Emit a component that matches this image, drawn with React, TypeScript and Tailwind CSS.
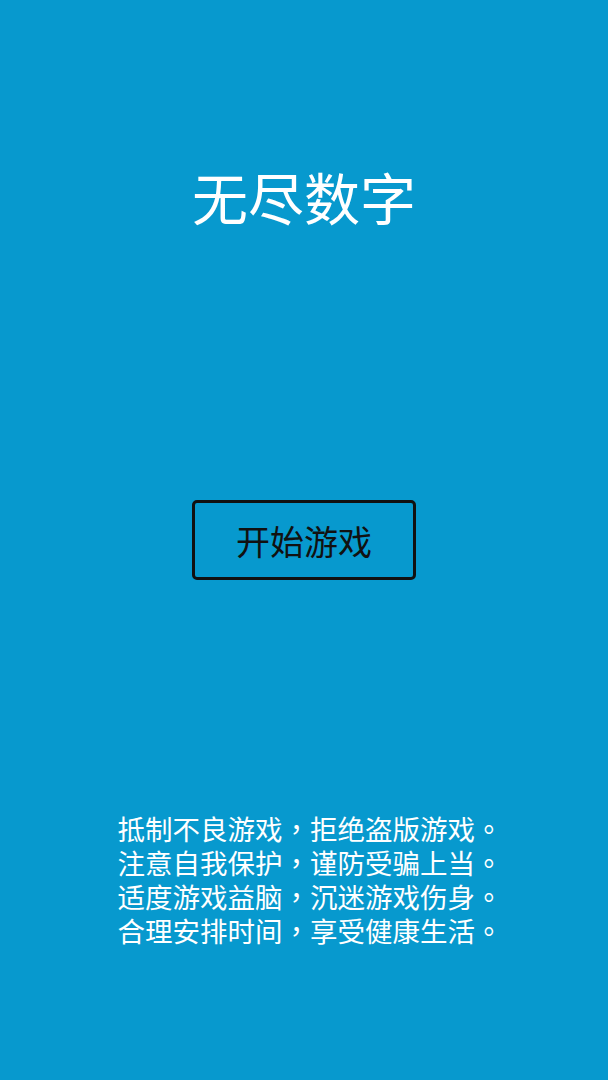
import React from "react";

const lines = [
  "抵制不良游戏，拒绝盗版游戏。",
  "注意自我保护，谨防受骗上当。",
  "适度游戏益脑，沉迷游戏伤身。",
  "合理安排时间，享受健康生活。",
];

// punctuation sits centred in its cell in the reference, as in the TC font
const Line: React.FC<{ text: string }> = ({ text }) => (
  <p>
    {text
      .split(/([，。])/)
      .filter(Boolean)
      .map((part, i) =>
        part === "，" || part === "。" ? (
          <span key={i} style={{ fontFamily: '"Noto Sans CJK TC", sans-serif' }}>
            {part}
          </span>
        ) : (
          <span key={i}>{part}</span>
        )
      )}
  </p>
);

const App: React.FC = () => {
  return (
    <div
      className="w-[608px] h-[1080px] bg-[#0799ce] flex flex-col items-center overflow-hidden"
      style={{ fontFamily: '"Noto Sans CJK SC", "Noto Sans", sans-serif' }}
    >
      <h1 className="mt-[162px] text-[56px] leading-[68px] text-white font-normal">
        无尽数字
      </h1>

      <button className="mt-[270px] w-[224px] h-[80px] border-[3px] border-[#111] rounded-[5px] flex items-center justify-center text-[34px] text-[#111]">
        开始游戏
      </button>

      <div className="mt-[231px] pl-[12px] flex flex-col items-center text-white text-[27.5px] leading-[34px]">
        {lines.map((l) => (
          <Line key={l} text={l} />
        ))}
      </div>
    </div>
  );
};

export default App;
